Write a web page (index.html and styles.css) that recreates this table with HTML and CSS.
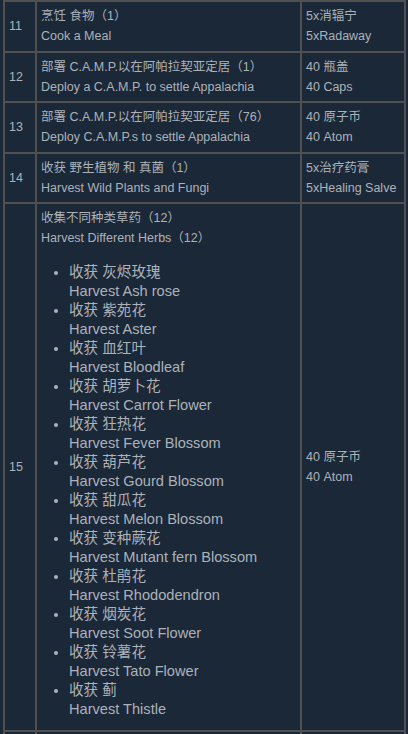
FILE: index.html
```html
<!DOCTYPE html>
<html lang="zh-CN">
<head>
<meta charset="utf-8">
<title>挑战</title>
<link rel="stylesheet" href="styles.css">
</head>
<body>
<div class="page">
<table class="bb-table">
<colgroup><col class="c1"><col class="c2"><col class="c3"></colgroup>
<tr>
<td class="num">11</td>
<td>烹饪 食物（1）<br>Cook a Meal</td>
<td>5x消辐宁<br>5xRadaway</td>
</tr>
<tr>
<td class="num">12</td>
<td>部署 C.A.M.P.以在阿帕拉契亚定居（1）<br>Deploy a C.A.M.P. to settle Appalachia</td>
<td>40 瓶盖<br>40 Caps</td>
</tr>
<tr>
<td class="num">13</td>
<td>部署 C.A.M.P.以在阿帕拉契亚定居（76）<br>Deploy C.A.M.P.s to settle Appalachia</td>
<td>40 原子币<br>40 Atom</td>
</tr>
<tr>
<td class="num">14</td>
<td>收获 野生植物 和 真菌（1）<br>Harvest Wild Plants and Fungi</td>
<td>5x治疗药膏<br>5xHealing Salve</td>
</tr>
<tr>
<td class="num">15</td>
<td>收集不同种类草药（12）<br>Harvest Different Herbs（12）
<ul class="herbs">
<li>收获 灰烬玫瑰<br>Harvest Ash rose</li>
<li>收获 紫苑花<br>Harvest Aster</li>
<li>收获 血红叶<br>Harvest Bloodleaf</li>
<li>收获 胡萝卜花<br>Harvest Carrot Flower</li>
<li>收获 狂热花<br>Harvest Fever Blossom</li>
<li>收获 葫芦花<br>Harvest Gourd Blossom</li>
<li>收获 甜瓜花<br>Harvest Melon Blossom</li>
<li>收获 变种蕨花<br>Harvest Mutant fern Blossom</li>
<li>收获 杜鹃花<br>Harvest Rhododendron</li>
<li>收获 烟炭花<br>Harvest Soot Flower</li>
<li>收获 铃薯花<br>Harvest Tato Flower</li>
<li>收获 蓟<br>Harvest Thistle</li>
</ul>
</td>
<td>40 原子币<br>40 Atom</td>
</tr>
<tr class="next">
<td class="num"></td>
<td></td>
<td></td>
</tr>
</table>
</div>
</body>
</html>
```
FILE: styles.css
```css
html, body {
  margin: 0;
  padding: 0;
  background: #1b2838;
}

.page {
  padding: 0 2px 0 3px;
}

.bb-table {
  border-collapse: separate;
  border-spacing: 0;
  border: 1px solid #505050;
  width: 403px;
  table-layout: fixed;
  font-family: "Liberation Sans", "Noto Sans CJK SC", sans-serif;
  font-size: 12.5px;
  line-height: 20.25px;
  color: #acb2b8;
}

.c1 { width: 32px; }
.c2 { width: 265px; }
.c3 { width: 104px; }

.bb-table td {
  border: 1px solid #505050;
  padding: 4px;
  vertical-align: middle;
}

.herbs {
  margin: 14px 0 7.5px 0;
  padding-left: 28px;
  font-size: 14.6px;
  line-height: 19px;
}

.next td {
  height: 40px;
}
```
